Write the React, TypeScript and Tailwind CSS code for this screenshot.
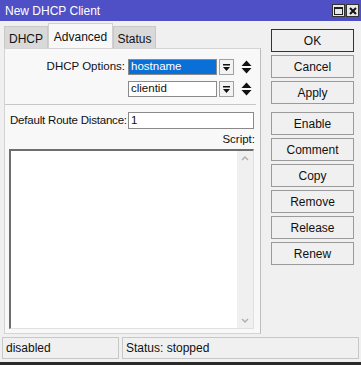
import React from 'react'

const font = { fontFamily: '"Liberation Sans", Arial, sans-serif' }

function SideButton({ label, strong }: { label: string; strong?: boolean }) {
  return (
    <div
      className={
        'h-[23px] w-[83px] flex items-center justify-center text-[12px] text-[#111] bg-[#f0f0f0] border ' +
        (strong ? 'border-[#333]' : 'border-[#9a9a9a]')
      }
    >
      {label}
    </div>
  )
}

function DropBtn() {
  return (
    <div className="w-[15px] h-[16px] border border-[#a0a0a0] bg-[#f3f3f3] flex items-center justify-center">
      <svg width="9" height="9" viewBox="0 0 9 9">
        <rect x="1" y="1" width="7" height="1.5" fill="#111" />
        <path d="M1 4 H8 L4.5 8 Z" fill="#111" />
      </svg>
    </div>
  )
}

function UpDown() {
  return (
    <svg width="11" height="14" viewBox="0 0 11 14" className="ml-[7px]">
      <path d="M5.5 0.5 L10.5 6 H0.5 Z" fill="#111" />
      <path d="M0.5 8 H10.5 L5.5 13.5 Z" fill="#111" />
    </svg>
  )
}

export default function App() {
  return (
    <div className="w-[361px] h-[365px] bg-[#f0f0f0] flex flex-col overflow-hidden" style={font}>
      {/* title bar */}
      <div className="h-[21px] bg-[#4f4fc6] flex items-center justify-between pl-[5px] pr-[2px]">
        <span className="text-white text-[12px]">New DHCP Client</span>
        <div className="flex gap-[1px]">
          <div className="w-[13px] h-[13px] bg-[#e8e8e8] border border-[#333] flex items-center justify-center">
            <div className="w-[9px] h-[8px] border border-[#222] border-t-2" />
          </div>
          <div className="w-[13px] h-[13px] bg-[#e8e8e8] border border-[#333] flex items-center justify-center">
            <svg width="8" height="8" viewBox="0 0 8 8">
              <path d="M1 1 L7 7 M7 1 L1 7" stroke="#111" strokeWidth="2" />
            </svg>
          </div>
        </div>
      </div>

      <div className="flex flex-1 pt-[1px]">
        {/* left side */}
        <div className="flex flex-col pl-[4px] w-[262px]">
          <div className="flex items-end h-[26px] text-[12px] text-[#111]">
            <div className="h-[22px] w-[44px] bg-[#d9d9d9] border border-b-0 border-[#c8c8c8] flex items-center justify-center pt-[2px]">
              DHCP
            </div>
            <div className="h-[25px] w-[65px] bg-[#f8f8f8] border border-b-0 border-[#d0d0d0] flex items-center justify-center pt-[1px]">
              Advanced
            </div>
            <div className="h-[22px] w-[43px] bg-[#d9d9d9] border border-b-0 border-[#c8c8c8] flex items-center justify-center pt-[2px]">
              Status
            </div>
          </div>
          <div className="w-[257px] h-[286px] bg-[#f8f8f8] border border-[#d4d4d4] border-r-[#bdbdbd] flex flex-col text-[11.5px] text-[#111]">
            <div className="flex items-center mt-[10px] h-[16px]">
              <span className="w-[123px] text-right pr-[3px]">DHCP Options:</span>
              <div className="w-[89px] h-[16px] border border-[#8a8a8a] bg-[#0a6fd6] flex items-center px-[2px] text-white">
                hostname
              </div>
              <div className="ml-[2px]">
                <DropBtn />
              </div>
              <UpDown />
            </div>
            <div className="flex items-center mt-[6px] h-[16px]">
              <span className="w-[123px]" />
              <div className="w-[89px] h-[16px] border border-[#8a8a8a] bg-white flex items-center px-[2px]">
                clientid
              </div>
              <div className="ml-[2px]">
                <DropBtn />
              </div>
              <UpDown />
            </div>
            <div className="mt-[7px] mr-[4px] h-[1px] bg-[#c8c8c8]" />
            <div className="flex items-center mt-[7px] h-[17px]">
              <span className="pl-[5px] w-[123px] whitespace-nowrap tracking-[-0.2px]">Default Route Distance:</span>
              <div className="w-[126px] h-[17px] border border-[#8a8a8a] bg-white flex items-center px-[2px]">
                1
              </div>
            </div>
            <div className="mt-[2px] pr-[5px] text-right h-[16px]">Script:</div>
            <div className="mt-[2px] ml-[4px] w-[245px] h-[180px] bg-white border border-[#e0e0e0] border-t-[#6e6e6e] border-l-[#6e6e6e] border-t-2 border-l-2 flex">
              <div className="flex-1" />
              <div className="w-[16px] bg-[#f0f0f0] flex flex-col items-center justify-between py-[4px]">
                <svg width="8" height="6" viewBox="0 0 8 6">
                  <path d="M1 5 L4 2 L7 5" stroke="#b0b0b0" strokeWidth="1.5" fill="none" />
                </svg>
                <svg width="8" height="6" viewBox="0 0 8 6">
                  <path d="M1 1 L4 4 L7 1" stroke="#b0b0b0" strokeWidth="1.5" fill="none" />
                </svg>
              </div>
            </div>
          </div>
        </div>

        {/* right buttons */}
        <div className="flex flex-col pl-[9px] pt-[7px] gap-[3px]">
          <SideButton label="OK" strong />
          <SideButton label="Cancel" />
          <SideButton label="Apply" />
          <div className="h-[2px]" />
          <SideButton label="Enable" />
          <SideButton label="Comment" />
          <SideButton label="Copy" />
          <SideButton label="Remove" />
          <SideButton label="Release" />
          <SideButton label="Renew" />
        </div>
      </div>

      {/* status bar */}
      <div className="flex gap-[3px] px-[2px] pb-[3px] mt-[2px] text-[12px] text-[#111]">
        <div className="w-[117px] h-[22px] border border-[#c8c8c8] flex items-center pl-[3px]">disabled</div>
        <div className="flex-1 h-[22px] border border-[#c8c8c8] flex items-center pl-[3px]">Status: stopped</div>
      </div>
      <div className="h-[3px] bg-[#2a2a2a]" />
    </div>
  )
}
